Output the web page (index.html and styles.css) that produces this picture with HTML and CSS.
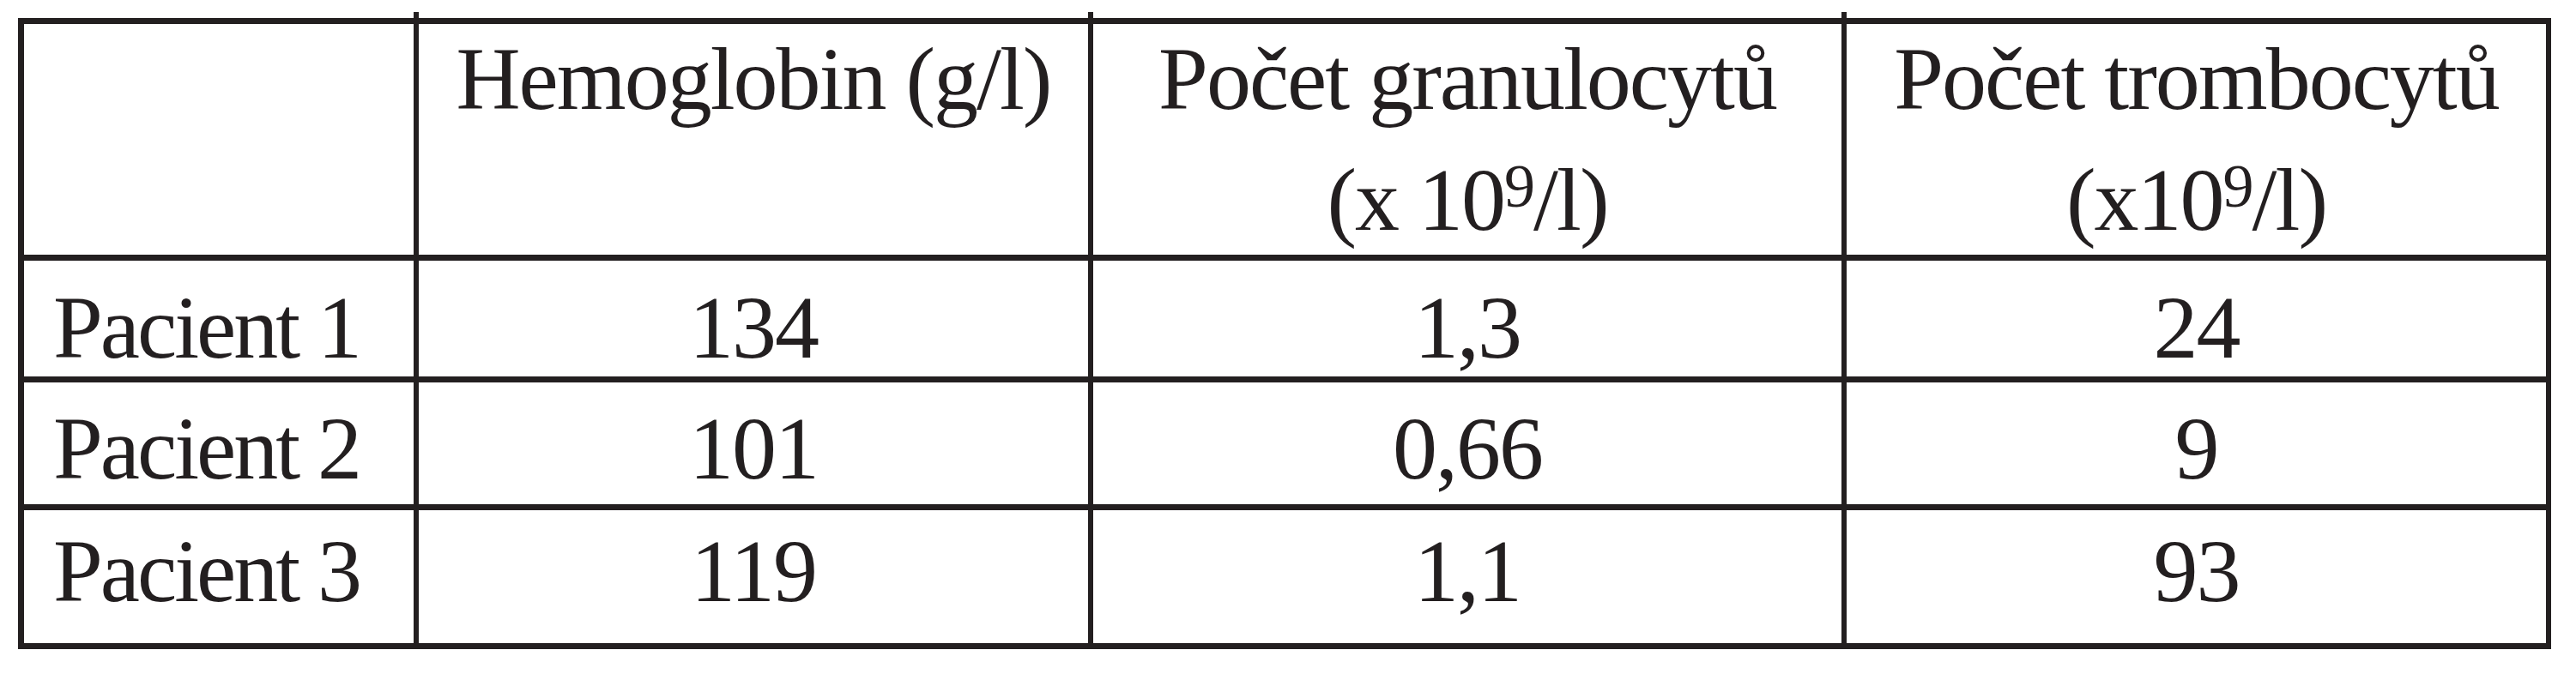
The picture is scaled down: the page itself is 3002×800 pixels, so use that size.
FILE: index.html
```html
<!DOCTYPE html>
<html lang="cs">
<head>
<meta charset="utf-8">
<title>Krevní obraz pacientů</title>
<link rel="stylesheet" href="styles.css">
</head>
<body>
<div class="page">
  <div class="ticks">
    <div class="tick"></div>
    <div class="tick mark"></div>
    <div class="tick mark"></div>
    <div class="tick mark"></div>
  </div>
  <div class="grid">
    <div class="cell head"></div>
    <div class="cell head"><div class="htext">Hemoglobin (g/l)</div></div>
    <div class="cell head"><div class="htext">Počet granulocytů<br>(x 10<sup class="exp">9</sup>/l)</div></div>
    <div class="cell head"><div class="htext">Počet trombocytů<br>(x10<sup class="exp">9</sup>/l)</div></div>

    <div class="cell name r1">Pacient 1</div>
    <div class="cell val r1">134</div>
    <div class="cell val r1">1,3</div>
    <div class="cell val r1">24</div>

    <div class="cell name r2">Pacient 2</div>
    <div class="cell val r2">101</div>
    <div class="cell val r2">0,66</div>
    <div class="cell val r2">9</div>

    <div class="cell name r3">Pacient 3</div>
    <div class="cell val r3">119</div>
    <div class="cell val r3">1,1</div>
    <div class="cell val r3">93</div>
  </div>
</div>
</body>
</html>
```
FILE: styles.css
```css
html, body {
  margin: 0;
  padding: 0;
  background: #ffffff;
}

.page {
  padding: 14px 0 0 21px;
  font-family: "Liberation Serif", "Times New Roman", serif;
  color: #231f20;
}

.ticks {
  display: grid;
  grid-template-columns: 461px 786px 878px 821px;
  height: 7px;
  width: 2952px;
}

.tick.mark {
  border-left: 6px solid #231f20;
}

.grid {
  display: grid;
  width: 2952px;
  box-sizing: border-box;
  grid-template-columns: 454px 780px 872px 815px;
  grid-template-rows: 269px 135px 142px 155px;
  column-gap: 6px;
  row-gap: 7px;
  padding: 7px 6px 7px 7px;
  background: #231f20;
}

.cell {
  background: #ffffff;
  font-size: 104px;
  letter-spacing: -2px;
  line-height: 104px;
  white-space: nowrap;
}

.head {
  text-align: center;
}

.htext {
  line-height: 141px;
  margin-top: -7px;
}

.exp {
  font-size: 72px;
  line-height: 0;
  vertical-align: 27px;
}

.name {
  padding-left: 34px;
  text-align: left;
  letter-spacing: -3px;
}

.val {
  text-align: center;
}

.r1 { padding-top: 26px; }
.r2 { padding-top: 25px; }
.r3 { padding-top: 19px; }
```
